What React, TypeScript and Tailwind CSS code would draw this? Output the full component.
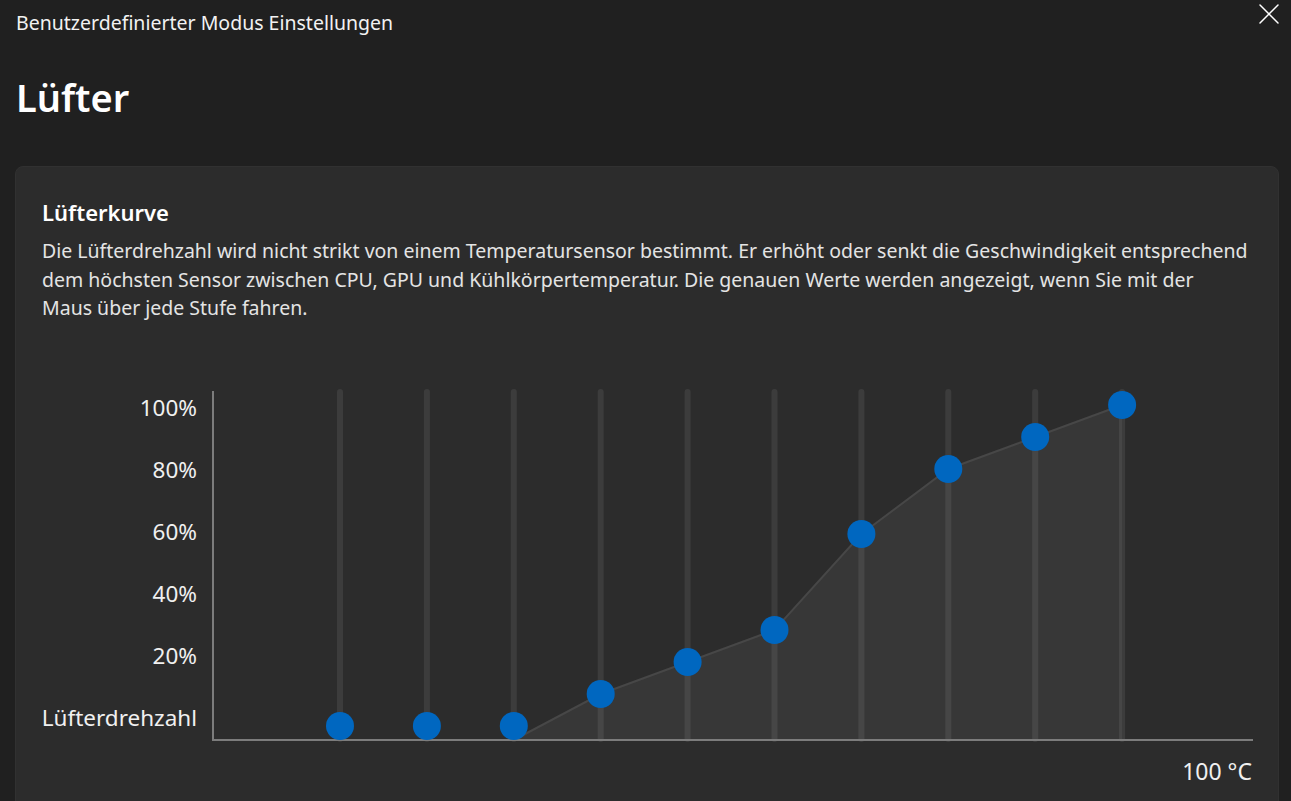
import React from 'react'

const trackXs = Array.from({ length: 10 }, (_, i) => 128 + i * 86.9)
const dotYs = [337, 337, 337, 305, 273, 241, 145, 80, 48, 16]
const yLabels = ['100%', '80%', '60%', '40%', '20%', 'Lüfterdrehzahl']

function CloseIcon() {
  return (
    <svg width="20" height="20" viewBox="0 0 20 20" fill="none" stroke="#ffffff" strokeWidth="1.5" strokeLinecap="round">
      <line x1="1" y1="1" x2="19" y2="19" />
      <line x1="19" y1="1" x2="1" y2="19" />
    </svg>
  )
}

function FanCurve() {
  const pts = [
    [trackXs[2], 351],
    ...trackXs.slice(3).map((x, i) => [x, dotYs[i + 3]]),
    [trackXs[9], 351],
  ]
  const poly = pts.map(([x, y]) => `${x},${y}`).join(' ')
  const line = pts.slice(0, -1).map(([x, y]) => `${x},${y}`).join(' ')
  return (
    <svg width="1041" height="354" viewBox="0 0 1041 354" className="block">
      <polygon points={poly} fill="#373737" />
      <polyline points={line} fill="none" stroke="#474747" strokeWidth="2" />
      {trackXs.map((x) => (
        <line key={x} x1={x} y1="3" x2={x} y2="350" stroke="rgba(255,255,255,0.08)" strokeWidth="6" strokeLinecap="round" />
      ))}
      <line x1="1" y1="2" x2="1" y2="352" stroke="#7c7c7c" strokeWidth="2" />
      <line x1="0" y1="351" x2="1041" y2="351" stroke="#7c7c7c" strokeWidth="2" />
      {trackXs.map((x, i) => (
        <circle key={i} cx={x} cy={dotYs[i]} r="14" fill="#0067c0" />
      ))}
    </svg>
  )
}

export default function App() {
  return (
    <div className="w-full h-[801px] overflow-hidden bg-[#202020] text-white font-['Segoe_UI','Noto_Sans',sans-serif]">
      <div className="flex items-start justify-between">
        <div className="pl-4 pt-[10px] text-[19.5px] leading-[26px] text-[#f2f2f2]">Benutzerdefinierter Modus Einstellungen</div>
        <div className="mt-[4px] mr-[12px]">
          <CloseIcon />
        </div>
      </div>

      <h1 className="mt-[35px] pl-4 text-[38px] leading-[52px] font-semibold">Lüfter</h1>

      <div className="mt-[43px] ml-[15px] mr-[12px] h-[700px] rounded-lg border border-[#313131] bg-[#2c2c2c] pl-[26px] pr-[26px] pt-[29px]">
        <h2 className="text-[22px] leading-[32px] font-semibold">Lüfterkurve</h2>
        <p className="mt-[9px] text-[19.5px] leading-[28.5px] text-[#e4e4e4] whitespace-nowrap">
          Die Lüfterdrehzahl wird nicht strikt von einem Temperatursensor bestimmt. Er erhöht oder senkt die Geschwindigkeit entsprechend
          <br />
          dem höchsten Sensor zwischen CPU, GPU und Kühlkörpertemperatur. Die genauen Werte werden angezeigt, wenn Sie mit der
          <br />
          Maus über jede Stufe fahren.
        </p>

        <div className="mt-[54px] flex items-start">
          <div className="w-[155px] flex flex-col items-end">
            {yLabels.map((l) => (
              <div key={l} className="h-[62px] flex items-center text-[22.5px] text-[#f0f0f0]">
                {l}
              </div>
            ))}
          </div>
          <div className="ml-[15px] mt-[12px]">
            <FanCurve />
          </div>
        </div>
        <div className="mt-[7px] w-[1210px] text-right text-[23px] leading-[30px] text-[#f0f0f0]">100 °C</div>
      </div>
    </div>
  )
}
